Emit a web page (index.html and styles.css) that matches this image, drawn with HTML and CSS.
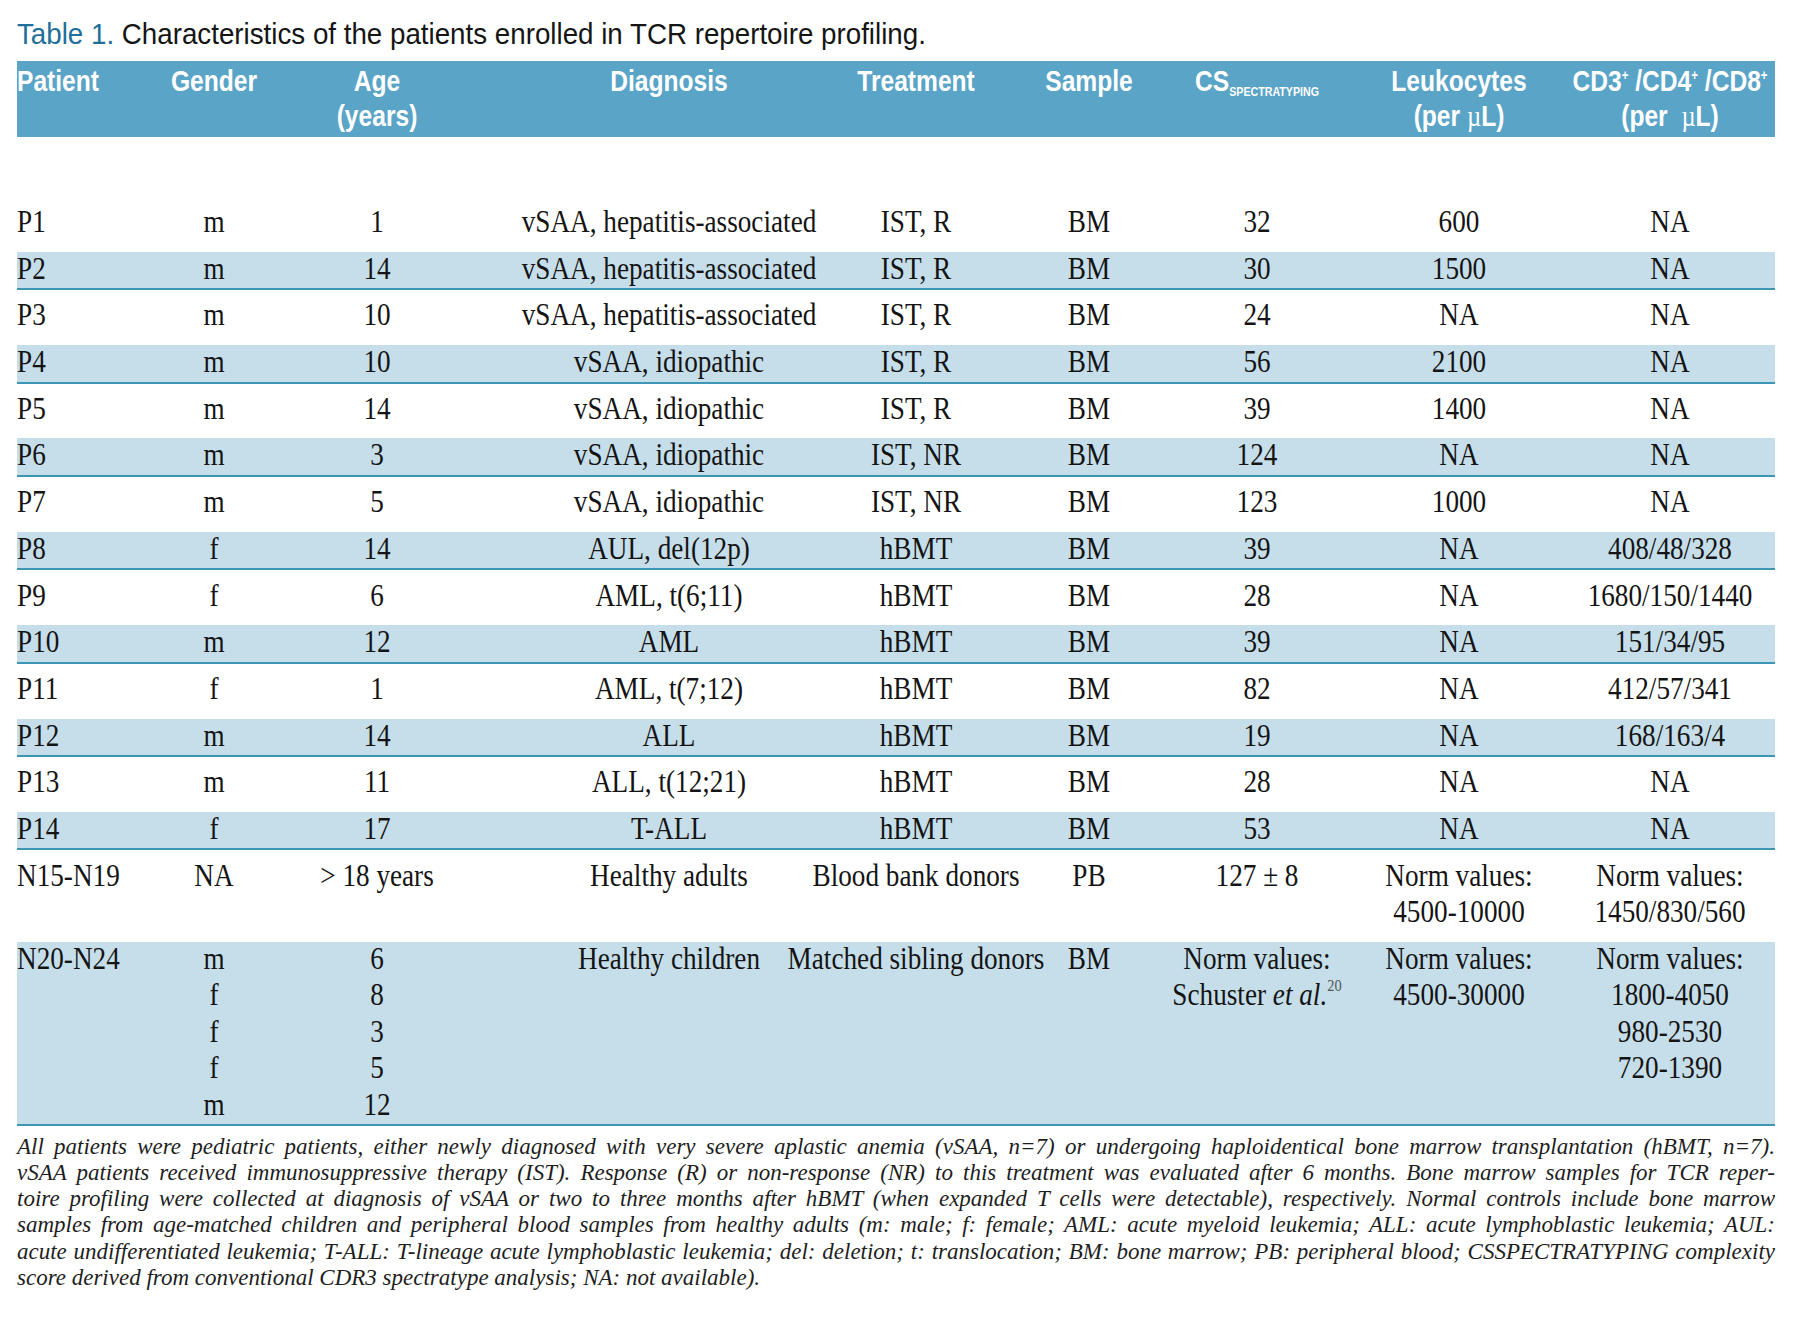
FILE: index.html
```html
<!DOCTYPE html>
<html lang="en">
<head>
<meta charset="utf-8">
<title>Table 1</title>
<link rel="stylesheet" href="styles.css">
</head>
<body>
<div class="page">
  <h1 class="title"><span class="label">Table 1.</span> Characteristics of the patients enrolled in TCR repertoire profiling.</h1>

  <div class="table">
    <div class="thead">
      <div class="th first"><span class="in">Patient</span></div>
      <div class="th"><span class="in">Gender</span></div>
      <div class="th"><span class="in">Age<br>(years)</span></div>
      <div class="th"><span class="in">Diagnosis</span></div>
      <div class="th"><span class="in">Treatment</span></div>
      <div class="th"><span class="in">Sample</span></div>
      <div class="th"><span class="in">CS<span class="sub">SPECTRATYPING</span></span></div>
      <div class="th"><span class="in">Leukocytes<br>(per <span class="mu">µ</span>L)</span></div>
      <div class="th"><span class="in">CD3<sup>+</sup> /CD4<sup>+</sup> /CD8<sup>+</sup><br>(per &nbsp;<span class="mu">µ</span>L)</span></div>
    </div>

    <div class="tbody">
      <div class="tr">
        <div class="td first">P1</div><div class="td">m</div><div class="td">1</div><div class="td">vSAA, hepatitis-associated</div><div class="td">IST, R</div><div class="td">BM</div><div class="td">32</div><div class="td">600</div><div class="td">NA</div>
      </div>
      <div class="tr alt">
        <div class="td first">P2</div><div class="td">m</div><div class="td">14</div><div class="td">vSAA, hepatitis-associated</div><div class="td">IST, R</div><div class="td">BM</div><div class="td">30</div><div class="td">1500</div><div class="td">NA</div>
      </div>
      <div class="tr">
        <div class="td first">P3</div><div class="td">m</div><div class="td">10</div><div class="td">vSAA, hepatitis-associated</div><div class="td">IST, R</div><div class="td">BM</div><div class="td">24</div><div class="td">NA</div><div class="td">NA</div>
      </div>
      <div class="tr alt">
        <div class="td first">P4</div><div class="td">m</div><div class="td">10</div><div class="td">vSAA, idiopathic</div><div class="td">IST, R</div><div class="td">BM</div><div class="td">56</div><div class="td">2100</div><div class="td">NA</div>
      </div>
      <div class="tr">
        <div class="td first">P5</div><div class="td">m</div><div class="td">14</div><div class="td">vSAA, idiopathic</div><div class="td">IST, R</div><div class="td">BM</div><div class="td">39</div><div class="td">1400</div><div class="td">NA</div>
      </div>
      <div class="tr alt">
        <div class="td first">P6</div><div class="td">m</div><div class="td">3</div><div class="td">vSAA, idiopathic</div><div class="td">IST, NR</div><div class="td">BM</div><div class="td">124</div><div class="td">NA</div><div class="td">NA</div>
      </div>
      <div class="tr">
        <div class="td first">P7</div><div class="td">m</div><div class="td">5</div><div class="td">vSAA, idiopathic</div><div class="td">IST, NR</div><div class="td">BM</div><div class="td">123</div><div class="td">1000</div><div class="td">NA</div>
      </div>
      <div class="tr alt">
        <div class="td first">P8</div><div class="td">f</div><div class="td">14</div><div class="td">AUL, del(12p)</div><div class="td">hBMT</div><div class="td">BM</div><div class="td">39</div><div class="td">NA</div><div class="td">408/48/328</div>
      </div>
      <div class="tr">
        <div class="td first">P9</div><div class="td">f</div><div class="td">6</div><div class="td">AML, t(6;11)</div><div class="td">hBMT</div><div class="td">BM</div><div class="td">28</div><div class="td">NA</div><div class="td">1680/150/1440</div>
      </div>
      <div class="tr alt">
        <div class="td first">P10</div><div class="td">m</div><div class="td">12</div><div class="td">AML</div><div class="td">hBMT</div><div class="td">BM</div><div class="td">39</div><div class="td">NA</div><div class="td">151/34/95</div>
      </div>
      <div class="tr">
        <div class="td first">P11</div><div class="td">f</div><div class="td">1</div><div class="td">AML, t(7;12)</div><div class="td">hBMT</div><div class="td">BM</div><div class="td">82</div><div class="td">NA</div><div class="td">412/57/341</div>
      </div>
      <div class="tr alt">
        <div class="td first">P12</div><div class="td">m</div><div class="td">14</div><div class="td">ALL</div><div class="td">hBMT</div><div class="td">BM</div><div class="td">19</div><div class="td">NA</div><div class="td">168/163/4</div>
      </div>
      <div class="tr">
        <div class="td first">P13</div><div class="td">m</div><div class="td">11</div><div class="td">ALL, t(12;21)</div><div class="td">hBMT</div><div class="td">BM</div><div class="td">28</div><div class="td">NA</div><div class="td">NA</div>
      </div>
      <div class="tr alt">
        <div class="td first">P14</div><div class="td">f</div><div class="td">17</div><div class="td">T-ALL</div><div class="td">hBMT</div><div class="td">BM</div><div class="td">53</div><div class="td">NA</div><div class="td">NA</div>
      </div>
      <div class="tr">
        <div class="td first">N15-N19</div><div class="td">NA</div><div class="td">&gt; 18 years</div><div class="td">Healthy adults</div><div class="td">Blood bank donors</div><div class="td">PB</div><div class="td">127 ± 8</div>
        <div class="td"><span>Norm values:</span><span>4500-10000</span></div>
        <div class="td"><span>Norm values:</span><span>1450/830/560</span></div>
      </div>
      <div class="tr alt">
        <div class="td first">N20-N24</div>
        <div class="td"><span>m</span><span>f</span><span>f</span><span>f</span><span>m</span></div>
        <div class="td"><span>6</span><span>8</span><span>3</span><span>5</span><span>12</span></div>
        <div class="td">Healthy children</div>
        <div class="td">Matched sibling donors</div>
        <div class="td">BM</div>
        <div class="td"><span>Norm values:</span><span>Schuster <i>et al.</i><sup class="ref">20</sup></span></div>
        <div class="td"><span>Norm values:</span><span>4500-30000</span></div>
        <div class="td"><span>Norm values:</span><span>1800-4050</span><span>980-2530</span><span>720-1390</span></div>
      </div>
    </div>
  </div>

  <div class="note">
    <span class="ln">All patients were pediatric patients, either newly diagnosed with very severe aplastic anemia (vSAA, n=7) or undergoing haploidentical bone marrow transplantation (hBMT, n=7).</span>
    <span class="ln">vSAA patients received immunosuppressive therapy (IST). Response (R) or non-response (NR) to this treatment was evaluated after 6 months. Bone marrow samples for TCR reper-</span>
    <span class="ln">toire profiling were collected at diagnosis of vSAA or two to three months after hBMT (when expanded T cells were detectable), respectively. Normal controls include bone marrow</span>
    <span class="ln">samples from age-matched children and peripheral blood samples from healthy adults (m: male; f: female; AML: acute myeloid leukemia; ALL: acute lymphoblastic leukemia; AUL:</span>
    <span class="ln">acute undifferentiated leukemia; T-ALL: T-lineage acute lymphoblastic leukemia; del: deletion; t: translocation; BM: bone marrow; PB: peripheral blood; CSSPECTRATYPING complexity</span>
    <span class="ln last">score derived from conventional CDR3 spectratype analysis; NA: not available).</span>
  </div>
</div>
</body>
</html>
```

FILE: styles.css
```css
html, body {
  margin: 0;
  padding: 0;
  background: #ffffff;
}

.page {
  padding: 17px 25px 0 17px;
  width: 1758px;
  color: #161616;
}

.title {
  margin: 0 0 11px 0;
  font-family: "Liberation Sans", Arial, sans-serif;
  font-weight: normal;
  font-size: 29.5px;
  line-height: 33px;
  color: #151515;
  white-space: nowrap;
  transform: scaleX(0.94);
  transform-origin: left center;
}

.title .label {
  color: #1f6f9b;
}

/* ---------- table ---------- */

.thead,
.tr {
  display: grid;
  grid-template-columns: 143px 108px 218px 366px 128px 218px 118px 286px 136px;
  padding-right: 37px;
}

.thead {
  background: #5aa4c7;
  padding-top: 2px;
  padding-bottom: 2px;
  font-family: "Liberation Sans", Arial, sans-serif;
  font-weight: bold;
  font-size: 30px;
  line-height: 35px;
  height: 72px;
  color: #ffffff;
}

.th {
  display: flex;
  flex-direction: column;
  align-items: center;
  transform: scaleX(0.82);
}

.th.first {
  align-items: flex-start;
  transform-origin: left center;
}

.th .in {
  display: block;
  text-align: center;
  white-space: nowrap;
}

.th .sub {
  font-size: 13px;
  vertical-align: -5px;
  line-height: 0;
}

.th sup {
  font-size: 14px;
  vertical-align: 11px;
  line-height: 0;
}

.th .mu {
  font-family: "Liberation Serif", serif;
  font-weight: normal;
}

.tbody {
  display: flex;
  flex-direction: column;
  gap: 8.2px;
  margin-top: 68px;
  font-family: "Liberation Serif", "Times New Roman", serif;
  font-size: 32px;
  line-height: 36.5px;
  color: #141414;
}

.tr {
  border-bottom: 2px solid transparent;
}

.tr.alt {
  background: #c6deea;
  border-bottom-color: #3c97b4;
}

.td {
  display: flex;
  flex-direction: column;
  align-items: center;
  white-space: nowrap;
  transform: translateY(-2.5px) scaleX(0.85);
}

.td.first {
  align-items: flex-start;
  transform-origin: left center;
}

.td .ref {
  font-size: 17px;
  line-height: 0;
  vertical-align: 14px;
  color: #555;
}

/* ---------- footnote ---------- */

.note {
  margin-top: 7.5px;
  font-family: "Liberation Serif", "Times New Roman", serif;
  font-style: italic;
  font-size: 23px;
  line-height: 26.2px;
  color: #1e1e1e;
}

.note .ln {
  display: block;
  white-space: nowrap;
  text-align: justify;
  text-align-last: justify;
}

.note .ln.last {
  text-align-last: left;
}
```
